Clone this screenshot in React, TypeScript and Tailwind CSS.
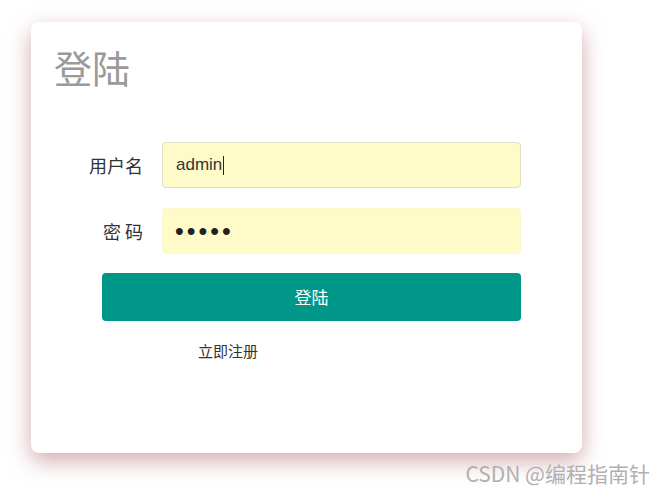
import { useState } from "react";

const cjk = "font-['Microsoft_YaHei','Noto_Sans_CJK_SC',sans-serif]";

export default function App() {
  const [username, setUsername] = useState("admin");
  const [password, setPassword] = useState("admin");

  return (
    <main className={`h-[496px] w-[655px] overflow-hidden bg-white ${cjk}`}>
      <section className="ml-[31px] mt-[22px] flex h-[431px] w-[551px] flex-col rounded-[8px] bg-white pl-[23px] pt-[22px] shadow-[0_8px_22px_rgba(175,100,110,0.55)]">
        <h1 className="text-[38px] leading-[46px] font-normal text-[#9a9a9a]">登陆</h1>

        <form className="mt-[52px] ml-[29px] w-[438px]" onSubmit={(e) => e.preventDefault()}>
          <div className="flex items-center gap-[19px]">
            <label className="w-[60px] whitespace-nowrap text-right text-[18px] text-[#333]">用户名</label>
            <div className="relative flex-1">
              <input
                value={username}
                onChange={(e) => setUsername(e.target.value)}
                className="h-[46px] w-full rounded-[4px] border border-[#e2e0c4] bg-[#fffbc9] px-[13px] font-['Liberation_Sans',sans-serif] text-[17px] text-[#333] outline-none"
              />
              {/* caret */}
              <span className="pointer-events-none absolute left-[61px] top-[14px] h-[19px] w-px bg-[#222]" />
            </div>
          </div>
          <div className="mt-[20px] flex items-center gap-[19px]">
            <label className="w-[60px] whitespace-nowrap text-right text-[18px] text-[#333]">密 码</label>
            <input
              type="password"
              value={password}
              onChange={(e) => setPassword(e.target.value)}
              className="h-[46px] flex-1 rounded-[4px] border border-[#fcf8cc] bg-[#fffbc9] px-[12px] font-['Liberation_Sans',sans-serif] text-[25px] tracking-[3px] text-[#222] outline-none"
            />
          </div>
          <button
            type="submit"
            className="mt-[19px] ml-[19px] h-[48px] w-[419px] rounded-[4px] bg-[#009688] text-[17px] text-white"
          >
            登陆
          </button>
          <div className="mt-[20px] ml-[115px] text-[15px] leading-[20px] text-[#333]">立即注册</div>
        </form>
      </section>
      <div className="mt-[8px] pr-[5px] text-right text-[21px] leading-[24px] text-[#b0b0b0]">
        CSDN @编程指南针
      </div>
    </main>
  );
}
